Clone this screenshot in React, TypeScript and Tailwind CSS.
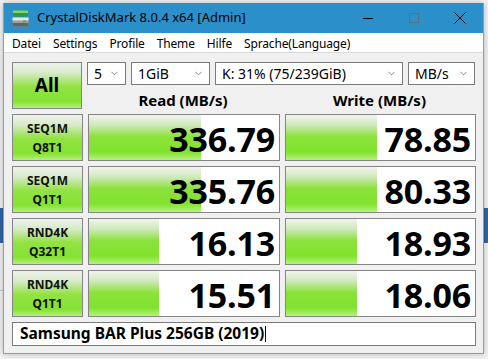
import { ChevronDown } from "lucide-react"

const bar = "bg-[linear-gradient(to_bottom,#f2f4f0_0%,#cfe9bb_22%,#8ce23c_48%,#80e22e_82%,#b6f37e_100%)]"
const btn = "bg-[linear-gradient(to_bottom,#eef1ec_0%,#d6ebc8_22%,#93e244_52%,#84e232_85%,#b4f07c_100%)]"

const rows = [
  { a: "SEQ1M", b: "Q8T1", read: "336.79", rw: 112, write: "78.85", ww: 91 },
  { a: "SEQ1M", b: "Q1T1", read: "335.76", rw: 112, write: "80.33", ww: 91 },
  { a: "RND4K", b: "Q32T1", read: "16.13", rw: 70, write: "18.93", ww: 71 },
  { a: "RND4K", b: "Q1T1", read: "15.51", rw: 70, write: "18.06", ww: 71 },
]

const menus = ["Datei", "Settings", "Profile", "Theme", "Hilfe", "Sprache(Language)"]

function Select({ label, w }: { label: string; w: string }) {
  return (
    <div className={`${w} h-[23px] bg-white border border-[#7a7a7a] flex items-center justify-between pl-[6px] pr-[5px] text-[14px] text-black`}>
      <span>{label}</span>
      <ChevronDown size={11} strokeWidth={1.5} className="text-[#555]" />
    </div>
  )
}

function Meter({ value, width }: { value: string; width: number }) {
  return (
    <div className="relative h-[47px] bg-white border border-[#858585] flex items-center justify-end pr-[4px]">
      <div className={`absolute left-0 top-0 bottom-0 ${bar}`} style={{ width }} />
      <span className="relative font-['Open_Sans'] font-bold text-[34px] leading-none text-black tracking-[-0.2px] pt-[2px]">{value}</span>
    </div>
  )
}

export default function App() {
  return (
    <div className="relative w-[488px] h-[359px] bg-[#f2f2f2] overflow-hidden font-['Noto_Sans',sans-serif]">
      {/* desktop behind the window */}
      <div className="absolute left-0 top-[208px] w-[6px] h-[35px] bg-[#2f64a5]" />
      <div className="absolute right-0 top-[208px] w-[6px] h-[35px] bg-[#2f64a5]" />
      <div className="absolute left-0 top-[290px] w-[6px] h-px bg-[#c8c8c8]" />

      <div className="relative ml-[3px] mt-[3px] w-[481px] h-[351px] bg-[#f0f0f0] border-x border-b border-[#9a9a9a] shadow-[0_0_6px_rgba(0,0,0,0.25)] flex flex-col">
        {/* title bar */}
        <div className="h-[30px] bg-[#2b8fca] flex items-center text-black">
          <svg width="17" height="17" viewBox="0 0 17 17" className="ml-[8px] mr-[8px]">
            <rect x="1" y="0.5" width="15" height="6" fill="#2f9a3a" />
            <rect x="1" y="0.5" width="15" height="2.5" fill="#7fd86f" />
            <rect x="0.5" y="7.5" width="16" height="9" fill="#9aa0a4" />
            <rect x="0.5" y="7.5" width="16" height="3" fill="#e4e6e8" />
            <rect x="0.5" y="13" width="16" height="3.5" fill="#5f6468" />
            <rect x="11" y="10.5" width="3" height="2" fill="#22c532" />
          </svg>
          <span className="text-[13px]">CrystalDiskMark 8.0.4 x64 [Admin]</span>
          <div className="ml-auto flex h-full">
            <div className="w-[46px] flex items-center justify-center">
              <div className="w-[10px] h-px bg-black" />
            </div>
            <div className="w-[46px] flex items-center justify-center">
              <div className="w-[10px] h-[10px] border border-[#5c6f7c]" />
            </div>
            <div className="w-[46px] flex items-center justify-center">
              <svg width="12" height="12" viewBox="0 0 12 12">
                <path d="M0.5 0.5 L11.5 11.5 M11.5 0.5 L0.5 11.5" stroke="#000" strokeWidth="1" />
              </svg>
            </div>
          </div>
        </div>

        {/* menu bar */}
        <div className="h-[20px] bg-white border-b border-[#dadada] flex items-center pl-[2px] pt-[3px] text-[12px] text-black">
          {menus.map((m) => (
            <span key={m} className="px-[6px] tracking-[-0.15px]">{m}</span>
          ))}
        </div>

        {/* client */}
        <div className="flex-1 flex flex-col px-[8px] pt-[9px]">
          <div className="flex gap-[5px]">
            <div className={`w-[71px] h-[47px] border border-[#858585] ${btn} flex items-center justify-center font-bold text-[19px] text-black`}>
              All
            </div>
            <div className="flex flex-col w-[388px]">
              <div className="flex gap-[5px]">
                <Select label="5" w="w-[39px]" />
                <Select label="1GiB" w="w-[79px]" />
                <Select label="K: 31% (75/239GiB)" w="w-[188px]" />
                <Select label="MB/s" w="w-[67px]" />
              </div>
              <div className="grid grid-cols-[192px_191px] gap-[5px] mt-[7px] font-bold text-[15px] text-black text-center leading-[17px]">
                <div>Read (MB/s)</div>
                <div>Write (MB/s)</div>
              </div>
            </div>
          </div>

          <div className="grid grid-cols-[71px_192px_191px] gap-[5px] mt-[5px]">
            {rows.map((r) => (
              <>
                <div key={r.a + r.b} className={`h-[47px] border border-[#858585] ${btn} flex flex-col items-center justify-center font-bold text-[12px] leading-[19px] text-[#111]`}>
                  <span>{r.a}</span>
                  <span>{r.b}</span>
                </div>
                <Meter value={r.read} width={r.rw} />
                <Meter value={r.write} width={r.ww} />
              </>
            ))}
          </div>

          <div className="mt-[5px] w-[464px] h-[24px] bg-white border border-[#7a7a7a] flex items-center pl-[7px] font-bold text-[15.5px] text-black">
            <span>Samsung BAR Plus 256GB (2019)</span>
            <span className="w-px h-[16px] bg-black ml-[1px]" />
          </div>
        </div>
      </div>
    </div>
  )
}
